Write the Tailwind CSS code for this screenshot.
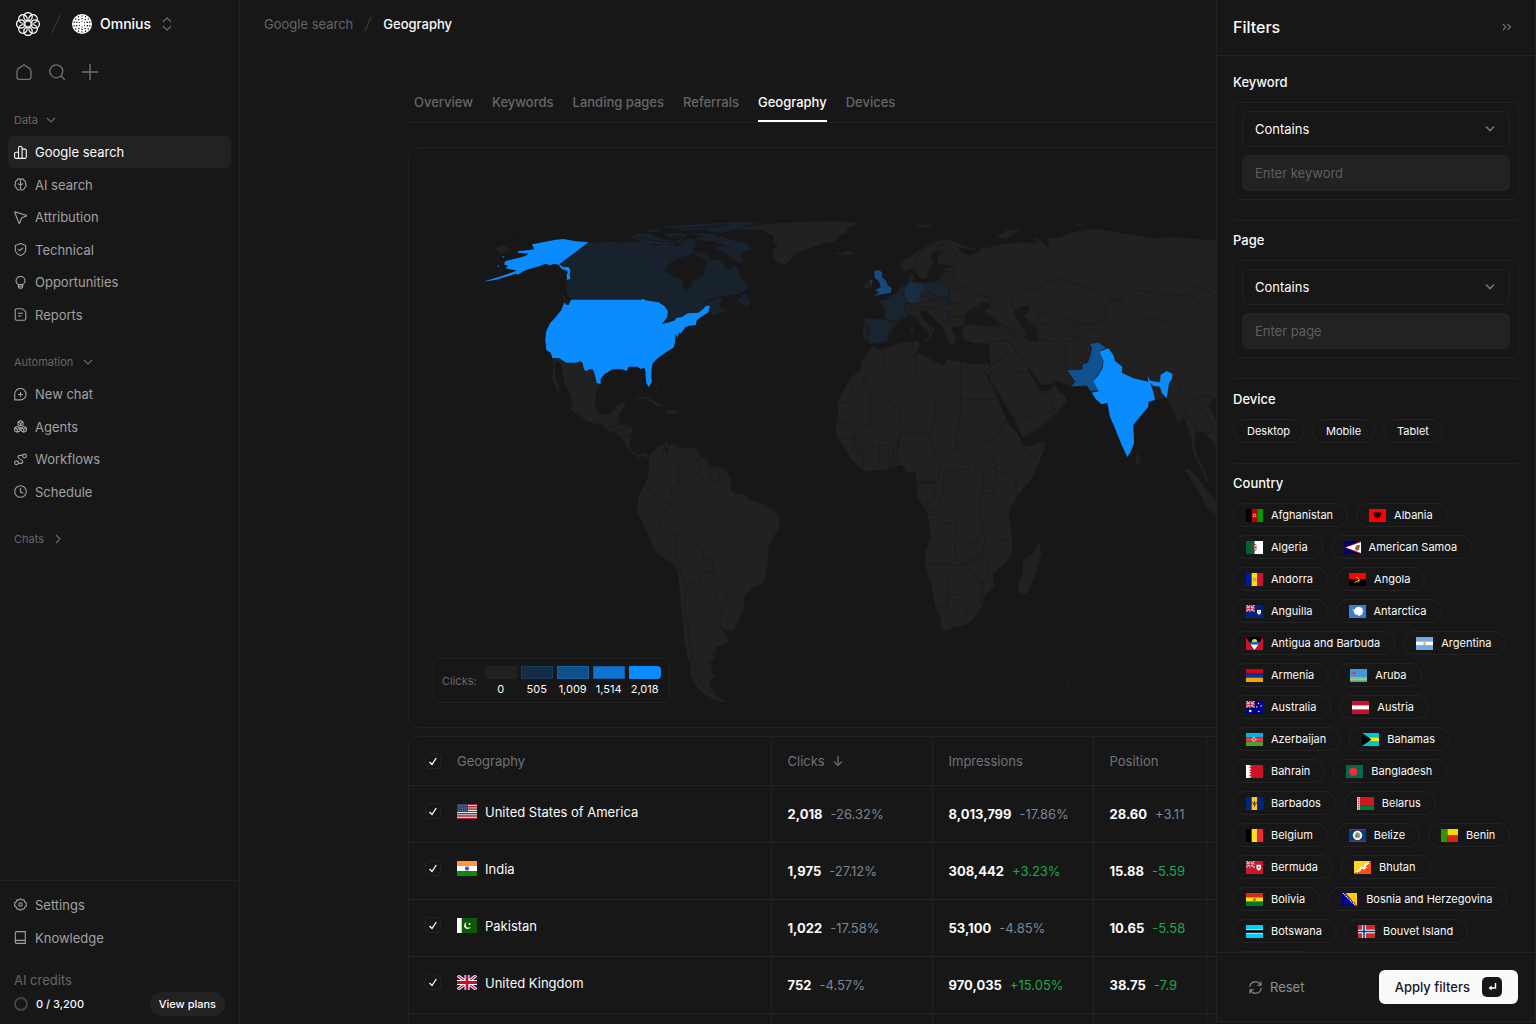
<!DOCTYPE html>
<html lang="en">
<head>
    <meta charset="UTF-8">
    <meta name="viewport" content="width=device-width, initial-scale=1.0">
    <title>Geography - Google search</title>
    <script src="https://cdn.jsdelivr.net/npm/@tailwindcss/browser@4"></script>
    <style>
        body {
            font-family: 'Inter', sans-serif;
        }
    </style>
</head>
<body class="relative flex h-screen overflow-hidden bg-[#171717] text-[13px] leading-5 text-[#fafafa]">

    <!-- SIDEBAR -->
    <aside class="flex w-60 shrink-0 flex-col border-r border-[#232323] text-[#a1a1a1]">
        <div class="flex h-12 items-center pl-4">
            <a href="#" aria-label="Home">
                <svg class="size-6" viewBox="-12 -12 24 24" fill="none" stroke="#fff" stroke-width="1.3">
                    <g id="logo-rings"></g>
                </svg>
            </a>
            <svg class="ml-2 h-5 w-4" viewBox="0 0 16 20" fill="none" stroke="#333" stroke-width="1.3"><path d="M4 19 12 1"/></svg>
            <button class="ml-2 flex items-center gap-2 text-sm font-medium text-white">
                <svg class="size-5" viewBox="-10 -10 20 20"><circle r="10" fill="#fff"/><g id="brand-dots" fill="#171717"></g></svg>
                Omnius
                <svg class="ml-0.5 h-3.5 w-3" viewBox="0 0 12 14" fill="none" stroke="#666" stroke-width="1.2" stroke-linecap="round" stroke-linejoin="round"><path d="M2.200 4.500 6 1l3.800 3.500M2.200 9.500 6 13l3.800-3.500"/></svg>
            </button>
        </div>

        <div class="flex h-12 items-center gap-[17px] pl-4 text-[#71717a]">
            <button aria-label="Home"><svg class="size-4" viewBox="0 0 16 16" fill="none" stroke="currentColor" stroke-width="1.3" stroke-linejoin="round"><path d="M1 7 2.200 4.600 8 .8l5.800 3.800L15 7v6.500c0 1-.7 1.800-1.700 1.800H2.700C1.700 15.300 1 14.500 1 13.500z"/></svg></button>
            <button aria-label="Search"><svg class="size-4" viewBox="0 0 16 16" fill="none" stroke="currentColor" stroke-width="1.3" stroke-linecap="round"><circle cx="7.300" cy="7.300" r="6.500"/><path d="m12 12 3.300 3.300"/></svg></button>
            <button aria-label="Add"><svg class="size-4" viewBox="0 0 16 16" fill="none" stroke="currentColor" stroke-width="1.4"><path d="M8 0v16M0 8h16"/></svg></button>
        </div>

        <button class="mt-4 flex h-4 items-center gap-2 pl-3.5 text-[11px] text-[#666]">Data
            <svg class="h-2 w-2.5" viewBox="0 0 10 8" fill="none" stroke="currentColor" stroke-width="1.2"><path d="m1 2 4 4 4-4"/></svg>
        </button>
        <nav class="mt-2 grid h-[195px] auto-rows-fr px-2">
            <a href="#" class="flex h-8 items-center gap-2 rounded-md bg-[#222] px-1.5 text-[#fafafa]">
                <svg class="size-[13px]" viewBox="0 0 13 13" fill="none" stroke="currentColor" stroke-width="1.1" stroke-linejoin="round"><path d="M4.500 12.400H2a1.300 1.300 0 0 1-1.400-1.300V7.600c0-.8.5-1.300 1.300-1.300h2.600m0 6.100V2c0-1 .5-1.500 1.400-1.500h.8c.9 0 1.400.5 1.400 1.500v10.400m-3.600 0h3.600m0-9.300h2.600c1 0 1.600.6 1.600 1.500v6.300c0 .9-.6 1.500-1.600 1.500H8.100"/></svg>
                Google search
            </a>
            <a href="#" class="flex h-8 items-center gap-2 rounded-md px-1.5">
                <svg class="size-[13px]" viewBox="0 0 13 13" fill="none" stroke="currentColor" stroke-width="1.1" stroke-linecap="round" stroke-linejoin="round"><path d="M6.500 1.500v10M6.500 1.800C5.500.2 3 .7 3 2.600 1.300 3 .9 4.700 1.700 5.800.4 6.800.7 9 2.300 9.600c0 2 2.700 3.100 4.200 1.700M6.500 1.800C7.500.2 10 .7 10 2.600c1.700.4 2.100 2.100 1.300 3.200 1.300 1 1 3.200-.6 3.800 0 2-2.700 3.100-4.200 1.700M4.200 5.800l2.300 1.200 2.300-1.200"/></svg>
                AI search
            </a>
            <a href="#" class="flex h-8 items-center gap-2 rounded-md px-1.5">
                <svg class="size-[13px]" viewBox="0 0 13 13" fill="none" stroke="currentColor" stroke-width="1.1" stroke-linejoin="round"><path d="M.9.9 12.300 4.300c.4.2.4.6 0 .8L7.600 7 5.700 12c-.2.4-.6.4-.8 0L.7 1.200c0-.2 0-.3.2-.3z"/></svg>
                Attribution
            </a>
            <a href="#" class="flex h-8 items-center gap-2 rounded-md px-1.5">
                <svg class="size-[13px]" viewBox="0 0 13 13" fill="none" stroke="currentColor" stroke-width="1.1" stroke-linecap="round" stroke-linejoin="round"><path d="M6.500.6 11.700 2.400v4.300c0 2.600-1.700 4.300-5.200 5.800C3 11 1.300 9.300 1.300 6.700V2.400zM4.500 6.400l1.400 1.300L8.700 5"/></svg>
                Technical
            </a>
            <a href="#" class="flex h-8 items-center gap-2 rounded-md px-1.5">
                <svg class="size-[13px]" viewBox="0 0 13 13" fill="none" stroke="currentColor" stroke-width="1.1" stroke-linecap="round"><path d="M4.300 8.600C2.800 7.700 2 6.400 2 4.900a4.500 4.500 0 0 1 9 0c0 1.500-.8 2.800-2.300 3.700M4.300 8.600h4.400v1.300c0 1.400-1 2.300-2.200 2.300s-2.200-.9-2.200-2.300zM4.500 10.200h4"/></svg>
                Opportunities
            </a>
            <a href="#" class="flex h-8 items-center gap-2 rounded-md px-1.5">
                <svg class="size-[13px]" viewBox="0 0 13 13" fill="none" stroke="currentColor" stroke-width="1.1"><path d="M3 .7h5.500l3.300 3.200v6.600c0 1.100-.7 1.800-1.800 1.800H3c-1.100 0-1.800-.7-1.800-1.800v-8C1.200 1.400 1.900.7 3 .7zM4 5.300h5M4 8h3.500"/></svg>
                Reports
            </a>
        </nav>

        <button class="mt-[23px] flex h-4 items-center gap-2.5 pl-3.5 text-[11px] text-[#666]">Automation
            <svg class="h-2 w-2.5" viewBox="0 0 10 8" fill="none" stroke="currentColor" stroke-width="1.2"><path d="m1 2 4 4 4-4"/></svg>
        </button>
        <nav class="mt-2 grid h-[130px] auto-rows-fr px-2">
            <a href="#" class="flex h-8 items-center gap-2 rounded-md px-1.5">
                <svg class="size-[13px]" viewBox="0 0 13 13" fill="none" stroke="currentColor" stroke-width="1.1" stroke-linejoin="round"><path d="M.7 11.900V6.400a5.700 5.700 0 1 1 5.700 5.500zM6.500 4v5M4 6.500h5"/></svg>
                New chat
            </a>
            <a href="#" class="flex h-8 items-center gap-2 rounded-md px-1.5">
                <svg class="size-[13px]" viewBox="0 0 13 13" fill="none" stroke="currentColor" stroke-width="1.1" stroke-linejoin="round"><path d="M6.500.5 9 1.900v2.800L6.500 6 4 4.700V1.900zM3.300 6.400l2.600 1.400v2.900l-2.600 1.500-2.700-1.500V7.800zM9.700 6.400l2.700 1.400v2.900l-2.700 1.500-2.600-1.500V7.800zM4 1.900l2.500 1.400L9 1.900M6.500 3.300V6M.6 7.800l2.700 1.500 2.600-1.500M3.300 9.300v2.900M7.100 7.800l2.600 1.500 2.700-1.500M9.700 9.300v2.900"/></svg>
                Agents
            </a>
            <a href="#" class="flex h-8 items-center gap-2 rounded-md px-1.5">
                <svg class="size-[13px]" viewBox="0 0 13 13" fill="none" stroke="currentColor" stroke-width="1.1"><circle cx="2.500" cy="9.800" r="1.900"/><circle cx="10.500" cy="3" r="1.900"/><path d="M8.600 2.400H6.300C4.800 2.400 4 3.200 4 4.300c0 2.300 4.800 1.500 4.800 4.100 0 1.200-.9 2-2.200 2H4.400"/></svg>
                Workflows
            </a>
            <a href="#" class="flex h-8 items-center gap-2 rounded-md px-1.5">
                <svg class="size-[13px]" viewBox="0 0 13 13" fill="none" stroke="currentColor" stroke-width="1.1" stroke-linecap="round"><circle cx="6.500" cy="6.500" r="5.800"/><path d="M6.500 3.300v3.500l2.300 1.100"/></svg>
                Schedule
            </a>
        </nav>

        <button class="mt-[23px] flex h-4 items-center gap-2.5 pl-3.5 text-[11px] text-[#666]">Chats
            <svg class="h-2.5 w-2" viewBox="0 0 8 10" fill="none" stroke="currentColor" stroke-width="1.2"><path d="m2 1 4 4-4 4"/></svg>
        </button>

        <div class="mt-auto border-t border-[#212121] px-2 pt-[7px] pb-2">
            <a href="#" class="flex h-[33px] items-center gap-2 px-1.5">
                <svg class="size-[13px]" viewBox="0 0 13 13" fill="none" stroke="currentColor" stroke-width="1.1" stroke-linejoin="round"><path d="M6.500.6 8 1.900l2-.1.6 1.900L12.300 5v3l-1.700 1.300-.6 1.900-2-.1-1.500 1.300L5 11.100l-2 .1-.6-1.900L.7 8V5l1.700-1.300L3 1.800l2 .1z"/><circle cx="6.500" cy="6.500" r="1.700"/></svg>
                Settings
            </a>
            <a href="#" class="flex h-[33px] items-center gap-2 px-1.5">
                <svg class="size-[13px]" viewBox="0 0 13 13" fill="none" stroke="currentColor" stroke-width="1.1"><path d="M11.300 9.400V.6H3C2 .6 1.300 1.300 1.300 2.300v8.600m10-1.500H2.800c-.9 0-1.500.6-1.500 1.500s.6 1.500 1.500 1.500h8.500V9.400"/></svg>
                Knowledge
            </a>
            <p class="mt-4 px-1.5 text-[#666]">AI credits</p>
            <div class="mt-0.5 flex items-center pl-1.5 pr-1.5 text-[11px] font-medium text-[#fafafa]">
                <span class="size-3.5 rounded-full border-2 border-[#444]"></span>
                <span class="ml-2">0 / 3,200</span>
                <button class="ml-auto h-6 rounded-full bg-[#222] px-[9px]">View plans</button>
            </div>
        </div>
    </aside>

    <!-- MAIN -->
    <main class="min-w-0 flex-1">
        <div class="flex h-12 items-center gap-[7px] px-6 text-[#666]">
            <a href="#">Google search</a>
            <svg class="h-4 w-4" viewBox="0 0 16 16" fill="none" stroke="#3a3a3a" stroke-width="1.2"><path d="M5 15 11 1"/></svg>
            <span class="font-medium text-[#fafafa]">Geography</span>
        </div>

        <div class="mx-auto mt-11 max-w-[960px]">
            <nav class="flex h-[31px] gap-[19px] border-b border-[#212121] px-1.5 font-medium text-[#666]">
                <a href="#">Overview</a>
                <a href="#">Keywords</a>
                <a href="#">Landing pages</a>
                <a href="#">Referrals</a>
                <a href="#" class="border-b-2 border-white text-[#fafafa]">Geography</a>
                <a href="#">Devices</a>
            </nav>

            <!-- World map -->
            <section class="relative mt-6 overflow-hidden rounded-xl border border-[#212121]">
                <svg class="block w-full" viewBox="409 148 958 579" fill="#212121" stroke="#181818" stroke-width="2" stroke-linejoin="round" role="img" aria-label="Clicks by country">
                    <!-- North America -->
                    <g transform="translate(476 210) scale(.33333)">
                        <path d="M765 58 810 50 870 41 960 35 1080 32 1157 38 1127 50 1110 58 1118 66 1090 78 1077 95 1032 105 990 120 960 130 945 148 925 166 905 158 890 142 886 120 905 108 892 92 890 78 860 62 810 60z"/>
                        <path d="m1082 122 18 4 25-5 17 4-10 10-27 3-17-6z"/>
                        <path d="m55 118 25-15 18 6-3 6 17 4-18 4-20 9zM110 86l18 0-10 2z"/>
                        <path d="M229 444 250 445 270 458 298 458 314 454 320 460 323 476 330 484 341 477 350 478 356 492 362 520 372 522 362 545 358 570 362 600 378 615 400 610 415 600 425 580 452 576 445 592 435 605 430 620 427 643 465 645 470 660 462 700 467 720 487 735 504 725 517 740 512 748 500 735 487 745 462 725 447 702 432 680 418 668 392 662 375 640 355 643 320 627 282 598 288 575 278 545 265 518 257 480 252 458 240 455 236 470 239 490 243 515 250 530 253 558 246 545 238 530 226 505 231 490z"/>
                        <path d="m473 568 17-9 25 2 25 14 23 17-18-2-15-10-25-14zm90 32 27-3 23 11-13 6-25-1zm-38 14h14v4h-12zm100-1h13v4h-12zM540 515l4 12-2 20-3-15zM640 625l3 10"/>
                        <path d="M400 622h28M404 626l-2 22-10 12M403 655l22-12 40 2M410 662l16 2 44-16M432 680l35-3" fill="none"/>
                        <g fill="#18222d" stroke="none">
                            <path d="M337 97 370 98 405 94 440 98 480 95 510 103 545 107 575 104 605 108 620 98 635 85 655 90 660 104 650 118 655 128 640 135 618 142 590 152 570 170 567 185 590 199 618 208 625 225 622 240 632 244 645 232 648 213 670 206 682 195 690 165 697 151 715 148 735 150 748 160 742 170 755 180 778 168 788 185 790 200 812 222 816 235 805 245 775 255 735 258 700 268 675 287 715 266 740 264 728 285 740 297 760 298 730 310 708 320 702 287 690 287 682 297 667 308 635 310 600 324 557 343 573 323 576 304 565 288 548 277 498 269 285 269 272 250 270 215 284 206 283 180 278 171 262 172 250 163z"/>
                            <path d="m778 275 17-13 10-14 7 14 10 6-2 22-15-3-10-7zM252 250l12 6 14 22-10-4zM243 222l6 8-2 10-5-12zM462 82l23-10 35-2 15 8 25 10 30 4 10 8-30 4-40-2-30 2-12-12-18-6z"/>
                            <path d="m660 85 40-10 40 5 35 12 35 8 18 20-28 5-10 15 20 8-20 8-25-11-20-15-30-15 30-10-25-10-40 0-18-4zM560 50l60-5 60-3 80-6 102 1-32 8-40 8-50 15-40-3-10-7-50 4-40-2zM560 72l40-4 40 7-20 9-40-2zM640 68l50 2 40 4-30 6-45-4zM650 133l30-8 25 20-15 5zM500 60l42-5 20 6-34 7zM600 92l14-6 10 8-14 6zM735 290l16 0-4 4z"/>
                        </g>
                        <!-- Sounds between the Arctic islands -->
                        <path d="M470 88l28-4 34 6 28 6 40-2M590 78l36 4 30-6M660 92l34 2 36 12 30 4M700 58l-40 6-30-4M560 58l70-4 70-2 60-8M720 122l24 6 26 12M505 66l40 4 50-6" fill="none" stroke="#171717" stroke-width="3"/>
                        <g fill="#0a8cff" stroke="none">
                            <path d="M285 269 498 269 502 266 508 271 548 277 565 288 576 304 573 323 557 343 580 337 597 331 600 324 618 321 635 310 667 308 682 297 690 287 702 287 697 307 672 323 661 333 660 345 640 347 627 352 622 361 612 372 609 367 605 383 599 372 597 395 594 412 570 427 545 445 530 460 527 475 526 500 528 515 518 532 511 518 509 500 508 482 505 473 494 477 484 470 458 470 452 483 440 478 410 478 385 493 374 507 374 522 362 520 356 492 350 478 341 477 330 484 323 476 320 460 314 454 298 458 270 458 250 445 229 444 224 428 211 420 208 390 210 365 222 340 240 320 256 300 265 277 272 285 278 285z"/>
                            <path d="m21 215 49-15 40-13 12-6-22-3-12-4 8-5-12-6 4-9 16-5 26-6 18-5 10-7-33-3 3-5 32-3 15-2-7-15 32-6 35-7 27-3 38 7 37 3-45 34-42 32 12 9 16-1 5 9-2 15 3 11-11 4-1-15 4-9-6-5-12-3-10-13-12-4-14 5-14-5-18 8-20 5-20 7-15 6-17 4-23 8-35 10zM64 166l7 2-4 3zM78 139l8 1-4 3zM120 190l20-4-16 8z"/>
                        </g>
                    </g>
                    <!-- South America -->
                    <g transform="translate(620 430) scale(.33333)">
                        <path d="M85 80 95 68 110 52 130 42 142 30 147 45 160 38 172 50 195 55 222 50 238 65 245 80 262 92 270 108 300 110 318 118 328 135 335 160 330 180 350 190 370 193 390 210 435 222 460 242 475 252 481 275 475 300 455 330 447 350 446 390 440 425 432 455 425 465 395 475 380 490 373 500 375 520 368 550 352 580 342 602 325 603 308 598 322 620 325 630 318 642 290 650 290 665 275 672 285 688 270 700 278 715 274 725 288 740 272 750 270 765 277 778 290 795 305 808 322 813 305 818 280 808 255 795 232 775 220 755 210 730 212 700 203 690 198 660 190 635 190 580 182 540 178 480 172 430 165 408 140 390 110 370 95 340 80 305 62 270 50 250 50 235 55 200 62 180 72 165 85 135z"/>
                        <path d="M133 43 130 85 140 95 175 105 172 155 178 160 152 170 158 200 150 235 130 240 120 275 128 300 150 308 155 320 198 305 202 328 248 352 252 385 275 392 282 428 285 455 302 460 320 480 318 520 288 518 290 490 245 462 240 435 250 425 275 425M175 110l5 55 15 5 12-10-4-28 35-5 3-25-8-10 10-25M240 125l10 25 10 15 14-10-6-48M272 150l25 5 2-40M298 152l12 2 10-25M70 167l35 22 15 22 30 5M105 190l-15 25-20 28-12-10M155 320l15 2 2 70 20 70 8 5 10-12 32 2M172 410l22 50 5 30-8 40 15 70 5 60 15 50 20 60 45 25M325 505l-22 45 42 35M303 550l2 48" fill="none"/>
                        <path d="m138 50 8 10-2 10-6-2z" fill="#181818"/>
                    </g>
                    <!-- Europe, Asia and Africa -->
                    <g transform="translate(820 210) scale(.33333)">
                        <path d="M240 155 265 145 290 125 320 103 350 93 385 86 412 97 430 105 468 115 465 122 430 116 415 113 425 125 445 135 475 125 480 115 510 110 560 100 600 97 640 100 650 92 625 83 650 82 668 95 688 112 672 115 690 105 680 85 720 80 760 65 800 58 830 55 870 62 900 68 950 75 1000 85 1060 80 1120 86 1200 90 1500 95V560H1195L1175 573 1165 590 1185 620 1195 660 1260 700 1200 725 1180 700 1165 680 1150 665 1130 665 1125 690 1130 730 1150 770 1170 820 1160 815 1143 780 1120 735 1112 690 1095 630 1090 620 1075 643 1065 620 1055 590 1040 565 1015 570 1003 570 985 590 960 620 940 645 942 700 932 725 922 741 905 705 885 655 870 620 862 578 845 583 828 568 815 547 800 528 752 530 710 510 690 525 665 525 640 490 625 472 626 485 650 520 660 542 690 540 705 522 715 545 740 560 738 575 715 605 685 635 640 665 608 685 600 665 580 620 545 565 510 510 508 490 510 460 508 435 508 400 500 402 460 400 430 390 425 365 432 350 400 352 395 365 412 385 400 404 390 405 375 370 365 350 345 330 320 305 300 305 310 330 340 352 348 365 335 365 338 380 325 388 325 365 300 345 285 322 270 315 258 325 230 338 225 352 210 370 205 390 190 400 155 402 145 395 133 392 128 375 135 345 130 328 190 328 195 300 185 280 168 275 205 262 230 248 245 225 265 222 266 200 278 190 283 200 278 213 312 218 345 215 358 208 362 195 372 190 372 175 405 168 362 165 350 158 352 140 372 122 345 125 330 140 340 155 335 170 322 190 320 205 300 208 290 190 278 175 255 185 243 175z"/>
                        <path d="M155 405 185 418 240 398 295 392 300 410 292 428 330 445 370 468 380 447 420 455 460 462 500 458 508 465 512 490 505 500 490 478 520 535 540 580 560 630 590 665 602 688 612 710 640 705 675 694 675 715 660 750 640 800 600 850 570 895 568 930 577 975 577 1030 560 1055 520 1090 522 1130 495 1155 490 1185 465 1220 440 1245 400 1253 372 1264 360 1255 362 1230 345 1190 333 1120 313 1060 318 1020 332 985 325 930 318 900 290 860 292 820 285 785 265 788 245 765 190 780 133 785 95 750 75 715 50 685 45 655 55 630 52 580 70 540 95 500 120 480 125 450 150 420z"/>
                        <path d="m658 995 7 35-20 70-23 50-17 7-10-12v-30l12-20 1-45 32-20zM948 725l14 25-2 13-12 0-3-23zM1092 773l20 7 38 45 15 20 25 30v40l-25-15-25-45-30-50zM736 1417l10-3 4 4-8 5zM722 1092l4 2-3 3z"/>
                        <path d="m270 45 70-3-10 10-30 1zM525 85l35-25 48-3-18 10-30 20zM735 40l60 2-15 8zM132 225l15-14 11 7-2 14-21 8zM302 390l25-4-2 12zM270 350l10-3 2 22-8 4zM400 412l25 4-15 2zM480 416l16-2-8 5zM47 123l15 5 25-7 17 4-10 10-27 3-17-6z"/>
                        <g fill="#181818">
                            <path d="M432 345 434 318 445 303 470 292 480 293 478 280 500 278 512 290 487 305 520 325 545 345 500 350 465 343z"/>
                            <path d="m580 305 20-15 25 0v15l-15 10 15 20 25 15 5 40-25 2-18-7 8-15-20-30z"/>
                        </g>
                        <!-- Borders -->
                        <path d="M570 262 600 243 660 235 670 218 720 208 775 222 830 245 885 268 855 290 858 330 800 345 785 340 765 350 795 360 830 355M570 262l5 25 10 10M885 268l70-28 95 18 65-5 30 35-35 15-50 38-80-18-60-40-35-15M1110 225l50 15 35 22M655 310l35-5 30 15 40 15 25 5M655 310v35l35-5 40 30 35 15 25-15M570 392l25 38 30 42M655 390l65 5 15 20 5 65M735 395l25-5 30-5 18 17M510 395l55-3 30 38M540 345l25 8 30 5M565 353l10 20 15 10M510 440l20 15 40-30M510 470l25-20 65 40 25-5M598 628l42-8 65-20-15-40-30-15M705 600l-20 35M907 470l40 25 38 18M1065 500l15 40-20 45M1080 560l20 15 60-20 30 15M1095 585l5 40 25 10 5 30M1125 580l35 30 20 55-35 5"/>
                        <path d="M285 190 288 150 305 120 335 103 360 110 370 100 385 95 410 145M405 168l-5 35-35-5M375 182l30 5M400 203l40 25-50 15-5 40 35-5 10 20M440 228l20 15 55 25-5 20M385 220l15-17M388 262l-35 10-50-15M255 290l35-10 35-5 30-10 40 12M262 315l15-20 40-5 30 10M350 275l-15 18M388 320l45 0M360 340l35-5 15 12M400 280l-40 5-20 15M144 345l4 48" fill="none"/>
                        <path d="M50 577h40l5-52 33-3V503l62-33-2-52M128 505l20 27 4 116-62 7M55 632l38 15M128 503 240 603 345 545 292 505 285 440 275 395M285 440l7-15M422 455v145l-77-35M430 568h105M422 600l-12 80 0 35M345 570v50l-15 50H240L230 730M240 603l0 30-50 25-35 35 8 25M93 655l15 30M50 685l55 0-5 20 25 15 5 40M190 658l30 25 18 20M163 710l35-5 20-10M178 705l2 70M205 705l5 65M218 700l2 68M125 720l5 60M75 715l28-5M85 735l15-20 20 30M240 675l-10 70 12 20M330 675l15 50-35 35-20 25M345 725l-10 25 25 20-5 45H295M410 715l-30 15-40 15M410 715l40 60-75 10-5 20 0 45-25 50-30 5M410 700l30 20 80-30 20-25 10-30 50 30M430 730l60 60 40-20-15-40M520 690l20-28M520 775l50 25 80-55-35-25-15-30M530 780l-10 70H485l8-60M588 795v60l15-5M520 853l50 40M485 860l-8 50 15 40 25 15 0 30 60-10M322 915h35l10 25 40 0v40l20 15 45 5 15-50 10 40-10 45-10 20M405 1003l0 45 30 15 60-45 25-10 12 20-15 15M313 1060l80 3M393 1063l45 5 40-30M390 1065l-8 90 50 0 55-40-50-50M382 1110v80l-35 0M487 1117v60M435 1063l35 50 30 0 5-60M438 1205l15-12 8 8-15 16zM475 1165l8-8 6 10-8 10zM300 820h40l5 50-30 15" fill="none"/>
                        <!-- Countries with clicks -->
                        <path d="m162 183 16-3 10 10-3 10 13 12 5 13 12 10-3 13-50 9 16-10-13-7 17-8-4-17-13-10zM148 210l10 3-3 8z" fill="#164a7c" stroke="none"/>
                        <path d="m168 275 22-5 15-8 25-14 32 17 3 10-13 15 10 35-17 0-20 10-33-7 3-28-10-20zM132 326l18-2 42 4 35 12-22 25-2 15-18 18-33 5-8-10 4-43-15-10zM235 245l10-18 12 0-5 20zM312 222l28-8 40 6 8 35-10 8-28-5-34-16zM353 299l15-3 17 19 2 18-15 2-7-20zM275 335h5v10h-4z" fill="#182430"/>
                        <path d="m132 340 12 6-3 30 3 15-12 1-5-17z"/>
                        <path d="m258 225 14-12 13 5 23 0 8 22-18 15 9 17-17 8-25 0-13-20 0-20z" fill="#182c42"/>
                        <path d="m740 480 45-2 3-16 15-5 9-27 3-18-7-10 27-6 25 18-22 11 13 25-3 20-10 20-16 20 16 30-26 5-12-17-48 2 13-15z" fill="#105190"/>
                        <path d="m838 425 27-10 15 20 5 18 22 17-2 18 35 17 45 10-2-17 7 14 30 5 2-22 18-12 18 9-3 16-8 12-7 45-15-17-5-18-20-3-10-9 10 27 5 25-20 5 0 15-25 30-20 25 2 55-10 25-10 16-17-36-20-50-15-35-8-42-17 5-17-15-13-20 21-4-16-30 16-20 12-20 3-20z" fill="#0a8cff" stroke="none"/>
                    </g>
                </svg>

                <div class="absolute bottom-6 left-6 flex items-center gap-2 rounded-md border border-[#212121] px-2 py-[5px] text-[11px] leading-4">
                    <span class="text-[#666]">Clicks:</span>
                    <ul class="grid grid-cols-5 gap-1 text-center">
                        <li><span class="mt-0.5 block h-[13px] w-8 rounded-l bg-[#212121]"></span><span class="mt-0.5 block">0</span></li>
                        <li><span class="mt-0.5 block h-[13px] w-8 border border-[#143c63] bg-[#162c42]"></span><span class="mt-0.5 block">505</span></li>
                        <li><span class="mt-0.5 block h-[13px] w-8 border border-[#1463aa] bg-[#105088]"></span><span class="mt-0.5 block">1,009</span></li>
                        <li><span class="mt-0.5 block h-[13px] w-8 border border-[#0f5da5] bg-[#0e74d0]"></span><span class="mt-0.5 block">1,514</span></li>
                        <li><span class="mt-0.5 block h-[13px] w-8 rounded-r bg-[#0a8cff]"></span><span class="mt-0.5 block">2,018</span></li>
                    </ul>
                </div>
            </section>

            <!-- Table -->
            <div class="mt-2 overflow-hidden rounded-t-xl border border-[#212121]">
                <table class="w-full table-fixed text-left">
                    <colgroup>
                        <col class="w-[362px]">
                        <col class="w-[161px]">
                        <col class="w-[161px]">
                        <col class="w-[113px]">
                        <col>
                    </colgroup>
                    <thead class="text-[#71717a]">
                        <tr class="h-12 divide-x divide-[#232323]">
                            <th class="px-4 font-normal">
                                <div class="flex items-center gap-4">
                                    <span class="relative size-4">
                                        <input type="checkbox" checked aria-label="Select all" class="block size-4 appearance-none rounded border border-[#232323]">
                                        <svg class="pointer-events-none absolute inset-0 size-4" viewBox="0 0 16 16" fill="none" stroke="#fff" stroke-width="1.3"><path d="m4.500 9 2.500 2.500 4.300-6.500"/></svg>
                                    </span>
                                    Geography
                                </div>
                            </th>
                            <th class="px-4 font-normal">
                                <span class="flex items-center gap-2">Clicks
                                    <svg class="h-3 w-2.5" viewBox="0 0 10 12" fill="none" stroke="currentColor" stroke-width="1.2"><path d="M5 1v9.500M1 6.500l4 4 4-4"/></svg>
                                </span>
                            </th>
                            <th class="px-4 font-normal">Impressions</th>
                            <th class="px-4 font-normal">Position</th>
                            <th class="px-4"></th>
                        </tr>
                    </thead>
                    <tbody id="rows"></tbody>
                </table>
            </div>
        </div>
    </main>

    <!-- FILTERS PANEL -->
    <aside class="absolute top-0 right-0 bottom-0.5 flex w-80 flex-col border border-t-0 border-[#232323] bg-[#171717]">
        <div class="flex h-14 shrink-0 items-center justify-between border-b border-[#232323] pr-[23px] pb-0.5 pl-4">
            <h2 class="text-base font-medium">Filters</h2>
            <button aria-label="Close filters"><svg class="h-2 w-2.5" viewBox="0 0 10 8" fill="none" stroke="#71717a" stroke-width="1.1"><path d="m1 1 3 3-3 3M5.500 1l3 3-3 3"/></svg></button>
        </div>

        <div class="min-h-0 flex-1 overflow-hidden px-4 pt-4">
            <section class="border-b border-[#212121] pb-5">
                <label for="keyword" class="block font-medium">Keyword</label>
                <div class="mt-2.5 flex flex-col gap-2 rounded-md border border-[#212121] p-2">
                    <div class="relative">
                        <select aria-label="Keyword match" class="block h-9 w-full appearance-none rounded-md border border-[#212121] px-3">
                            <option>Contains</option>
                        </select>
                        <svg class="pointer-events-none absolute top-3.5 right-[15px] h-2 w-2.5" viewBox="0 0 10 8" fill="none" stroke="#71717a" stroke-width="1.7"><path d="m1 1.500 4 4 4-4"/></svg>
                    </div>
                    <input id="keyword" type="text" placeholder="Enter keyword" class="h-9 w-full rounded-md bg-[#222] px-[13px] placeholder:text-[#5e5e5e]">
                </div>
            </section>

            <section class="border-b border-[#212121] pt-[9px] pb-5">
                <label for="page" class="block font-medium">Page</label>
                <div class="mt-2.5 flex flex-col gap-2 rounded-md border border-[#212121] p-2">
                    <div class="relative">
                        <select aria-label="Page match" class="block h-9 w-full appearance-none rounded-md border border-[#212121] px-3">
                            <option>Contains</option>
                        </select>
                        <svg class="pointer-events-none absolute top-3.5 right-[15px] h-2 w-2.5" viewBox="0 0 10 8" fill="none" stroke="#71717a" stroke-width="1.7"><path d="m1 1.500 4 4 4-4"/></svg>
                    </div>
                    <input id="page" type="text" placeholder="Enter page" class="h-9 w-full rounded-md bg-[#222] px-[13px] placeholder:text-[#5e5e5e]">
                </div>
            </section>

            <section class="border-b border-[#212121] pt-2.5 pb-5">
                <h3 class="font-medium">Device</h3>
                <div class="mt-2.5 flex gap-2 text-[11px]">
                    <button class="h-6 rounded-full border border-[#232323] px-[13px]">Desktop</button>
                    <button class="h-6 rounded-full border border-[#232323] px-[13px]">Mobile</button>
                    <button class="h-6 rounded-full border border-[#232323] px-[13px]">Tablet</button>
                </div>
            </section>

            <section class="pt-[9px]">
                <h3 class="font-medium">Country</h3>
                <div id="countries" class="mt-2.5 flex flex-wrap gap-2 text-[11px]"></div>
            </section>
        </div>

        <div class="flex h-[69px] shrink-0 items-center justify-between border-t border-[#232323] pr-[17px] pl-8">
            <button class="flex items-center gap-2 text-[#8f8f8f]">
                <svg class="size-[13px]" viewBox="0 0 13 13" fill="none" stroke="currentColor" stroke-width="1.1" stroke-linecap="round" stroke-linejoin="round"><path d="M.8 5.800A5.700 5.700 0 0 1 11.500 3.800M12 .8v3.400H8.700M12.200 7.200A5.700 5.700 0 0 1 1.500 9.200M1 12.200V8.800h3.300"/></svg>
                Reset
            </button>
            <button class="flex h-[34px] items-center gap-3 rounded-md bg-[#fafafa] px-4 font-medium text-[#171717]">
                Apply filters
                <svg class="size-5" viewBox="0 0 20 20" fill="none"><rect width="20" height="20" rx="5" fill="#171717"/><path d="M13.500 6v5H8.500" stroke="#fff" stroke-width="1.4"/><path d="M6.500 11 9.700 8.400v5.200z" fill="#fff"/></svg>
            </button>
        </div>
    </aside>

    <script>
        // --- Logos ---
        const rings = document.getElementById('logo-rings');
        const dots = document.getElementById('brand-dots');
        let ringMarkup = '';
        for (let i = 0; i < 8; i++) {
            ringMarkup += `<circle cy="-7.200" r="4.200" transform="rotate(${i * 45})"/>`;
        }
        rings.innerHTML = ringMarkup;

        let dotMarkup = '';
        [[2.9, 6, 0.55], [5.5, 10, 0.75], [8, 14, 0.75]].forEach(([r, n, size]) => {
            for (let i = 0; i < n; i++) {
                dotMarkup += `<circle cy="${-r}" r="${size}" transform="rotate(${(i * 360) / n})"/>`;
            }
        });
        dots.innerHTML = dotMarkup;

        // --- Flags, drawn on a 17 x 13 grid ---
        const rect = (x, y, w, h, c) => `<rect x="${x}" y="${y}" width="${w}" height="${h}" fill="${c}"/>`;
        const bands = (...c) => c.map((color, i) => rect(0, (13 / c.length) * i, 17, 13 / c.length, color)).join('');
        const pales = (...c) => c.map((color, i) => rect((17 / c.length) * i, 0, 17 / c.length, 13, color)).join('');
        const path = (d, c) => `<path d="${d}" fill="${c}"/>`;
        const dot = (x, y, r, c) => `<circle cx="${x}" cy="${y}" r="${r}" fill="${c}"/>`;
        const line = (d, c, w) => `<path d="${d}" fill="none" stroke="${c}" stroke-width="${w}"/>`;
        const jack = rect(0, 0, 17, 13, '#012169') + line('M0 0 17 13M17 0 0 13', '#fff', 2.6) + line('M0 0 17 13M17 0 0 13', '#c8102e', 0.9)
            + line('M8.500 0v13M0 6.500h17', '#fff', 4.2) + line('M8.500 0v13M0 6.500h17', '#c8102e', 2.4);
        const canton = `<g transform="scale(.5)">${jack}</g>`;

        const flags = {
            us: bands('#b22234', '#fff', '#b22234', '#fff', '#b22234', '#fff', '#b22234', '#fff', '#b22234', '#fff', '#b22234', '#fff', '#b22234') + rect(0, 0, 9.3, 7, '#31406f')
                + '<path d="M1 1.500h8M1.500 3.500h8M1 5.500h8" stroke="#9ca3c4" stroke-width=".7" stroke-dasharray=".7 .9"/>',
            in: bands('#ff9933', '#fff', '#128807') + dot(8.5, 6.5, 1.9, '#6a6ac8') + dot(8.5, 6.5, 0.7, '#22228f'),
            pk: rect(0, 0, 17, 13, '#0c590b') + rect(0, 0, 4, 13, '#fff') + dot(9, 6.5, 2.9, '#fff') + dot(9.9, 5.8, 2.5, '#0c590b') + dot(10.6, 5.2, 0.8, '#fff'),
            gb: jack,
            af: pales('#000', '#bf0000', '#009900') + dot(8.5, 6.6, 2, '#d98080') + dot(8.5, 6.6, 0.8, '#bf0000'),
            al: rect(0, 0, 17, 13, '#ff0000') + path('M8.500 4.300 7.500 2.800 6.500 3.800 4.500 3 5 5 4.500 6.300 6 6.500 5.500 8.500 7.500 8.300 8.500 10.500 9.500 8.300 11.500 8.500 11 6.500 12.500 6.300 12 5 12.500 3 10.500 3.800 9.500 2.800z', '#200'),
            dz: rect(0, 0, 8.5, 13, '#006233') + rect(8.5, 0, 8.5, 13, '#fff') + line('M10.500 4.300a2.900 2.900 0 1 0 0 4.400', '#d21034', 1) + dot(9.8, 6.5, 1, '#d21034'),
            as: rect(0, 0, 17, 13, '#000066') + path('M0 6.500 17 0v13z', '#bd1021') + path('M2 6.500 17 1v11z', '#fff') + path('m11 7 2-3 3 0-1 5-3 1z', '#8a6a3a'),
            ad: pales('#0018a8', '#fedf00', '#d0103a') + dot(8.5, 6.5, 2, '#c7a060') + dot(8.5, 6.5, 0.8, '#e8c850'),
            ao: rect(0, 0, 17, 6.5, '#ff0000') + rect(0, 6.5, 17, 6.5, '#000') + line('M7 4.500c3 0 4 3 2 5M5.500 9.500l5-2.500', '#ffec00', 0.9),
            ai: rect(0, 0, 17, 13, '#00247d') + canton + path('M11 5h4v3l-2 2-2-2z', '#fff') + dot(13, 6.6, 1, '#f5b83d'),
            aq: rect(0, 0, 17, 13, '#3a7dce') + path('m3.200 4 2 1L7 2.500l3-.8 3.200 1.300.9 3-1 3.500-3 1.600L8.500 10 5.500 9 5 6.800z', '#fff'),
            ag: rect(0, 0, 17, 13, '#ce1126') + path('M0 0h17L8.500 13z', '#000') + dot(8.5, 4.5, 2.6, '#fcd116') + path('M3.300 5h10.400l-1.300 2.500H4.600z', '#0072c6') + path('M4.600 7.500h7.800L8.500 13z', '#fff'),
            ar: bands('#74acdf', '#fff', '#74acdf') + dot(8.5, 6.5, 1.2, '#e8a33d'),
            am: bands('#d90012', '#0033a0', '#f2a800'),
            aw: rect(0, 0, 17, 13, '#3d9bd9') + rect(0, 8.5, 17, 1, '#f9d616') + rect(0, 10.3, 17, 1, '#f9d616') + path('m4 1.600.8 1.700 1.700.8-1.700.8L4 6.600l-.8-1.700L1.500 4l1.700-.8z', '#ef3340'),
            au: rect(0, 0, 17, 13, '#00008b') + canton + dot(4.3, 10, 1.3, '#fff') + dot(12.5, 2.5, 0.7, '#fff') + dot(10.8, 6, 0.7, '#fff') + dot(15, 5, 0.7, '#fff') + dot(12.8, 10.5, 0.8, '#fff'),
            at: bands('#c8102e', '#fff', '#c8102e'),
            az: bands('#00b5e2', '#ef3340', '#509e2f') + line('M9 5.200a1.700 1.700 0 1 0 0 2.600', '#fff', 0.8) + dot(9.8, 6.5, 0.7, '#fff'),
            bs: bands('#00c6d2', '#ffe800', '#00c6d2') + path('M0 0 9.500 6.500 0 13z', '#000'),
            bh: rect(0, 0, 17, 13, '#ce1126') + path('M0 0h3l2.500 1.300L3 2.600l2.500 1.300L3 5.200l2.500 1.300L3 7.800l2.500 1.300L3 10.400l2.500 1.300L3 13H0z', '#fff'),
            bd: rect(0, 0, 17, 13, '#006a4e') + dot(7.3, 6.8, 4, '#f42a41'),
            bb: pales('#00267f', '#ffc726', '#00267f') + line('M8.500 4v6M6.800 5c0 2 .5 2.600 1.700 2.600s1.700-.6 1.700-2.600', '#3a2c00', 0.9),
            by: rect(0, 0, 17, 8.7, '#ce1720') + rect(0, 8.7, 17, 4.3, '#007c30') + rect(0, 0, 2.6, 13, '#fff') + line('M1.300 0v13', '#ce1720', 1.2) + '<path d="M1.300 .5v12.500" stroke="#fff" stroke-width="1.2" stroke-dasharray=".7 1.5"/>',
            be: pales('#000', '#fdda24', '#ed2939'),
            bz: rect(0, 0, 17, 13, '#003f87') + rect(0, 0, 17, 1.3, '#ce1126') + rect(0, 11.7, 17, 1.3, '#ce1126') + dot(8.5, 6.5, 4.7, '#fff') + dot(8.5, 6.5, 3, '#a9b88c') + dot(7.5, 7, 1, '#7a4a20') + dot(9.8, 7, 1, '#c05a40') + dot(8.5, 4.5, 1, '#3a7d2c'),
            bj: rect(0, 0, 6.5, 13, '#319400') + rect(6.5, 0, 10.5, 6.5, '#ffd600') + rect(6.5, 6.5, 10.5, 6.5, '#de2110'),
            bm: rect(0, 0, 17, 13, '#cf142b') + canton + path('M10.500 3.800h4.500v3.700l-2.200 2.500-2.300-2.500z', '#fff') + dot(12.7, 6.5, 1.1, '#5b6b5b'),
            bt: path('M0 0h17L0 13z', '#ffd520') + path('M17 0v13H0z', '#ff4e12') + line('M2.500 11 6 9l1-2.500 3 .5 1.500-3 3.500-2', '#fff', 1.8) + line('M9 8.500 13 6', '#fff', 1),
            bo: bands('#d52b1e', '#ffe000', '#007934') + dot(8.5, 6.5, 1.5, '#8a7a30'),
            ba: rect(0, 0, 17, 13, '#000099') + path('M4.500 0H16v13z', '#ffcc00') + '<path d="m2 0 13 13" stroke="#fff" stroke-width="1.3" stroke-dasharray="1.2 .8"/>',
            bw: rect(0, 0, 17, 13, '#00cbff') + rect(0, 4.5, 17, 4, '#fff') + rect(0, 5.2, 17, 2.6, '#000'),
            bv: rect(0, 0, 17, 13, '#d72828') + line('M6 0v13M0 6.500h17', '#fff', 3.6) + line('M6 0v13M0 6.500h17', '#003897', 1.6),
            br: rect(0, 0, 17, 13, '#009b3a') + path('M8.500 1.500 15.500 6.500l-7 5-7-5z', '#fedf00') + dot(8.5, 6.5, 2.5, '#002776')
        };

        // --- Country chips ---
        const countries = [
            ['af', 'Afghanistan'], ['al', 'Albania'], ['dz', 'Algeria'], ['as', 'American Samoa'], ['ad', 'Andorra'], ['ao', 'Angola'],
            ['ai', 'Anguilla'], ['aq', 'Antarctica'], ['ag', 'Antigua and Barbuda'], ['ar', 'Argentina'], ['am', 'Armenia'], ['aw', 'Aruba'],
            ['au', 'Australia'], ['at', 'Austria'], ['az', 'Azerbaijan'], ['bs', 'Bahamas'], ['bh', 'Bahrain'], ['bd', 'Bangladesh'],
            ['bb', 'Barbados'], ['by', 'Belarus'], ['be', 'Belgium'], ['bz', 'Belize'], ['bj', 'Benin'], ['bm', 'Bermuda'], ['bt', 'Bhutan'],
            ['bo', 'Bolivia'], ['ba', 'Bosnia and Herzegovina'], ['bw', 'Botswana'], ['bv', 'Bouvet Island'], ['br', 'Brazil']
        ];
        document.getElementById('countries').innerHTML = countries.map(([code, name]) => `
            <button class="flex h-6 items-center gap-2 rounded-full border border-[#232323] pr-3.5 pl-3">
                <svg class="h-[13px] w-[17px]" viewBox="0 0 17 13" preserveAspectRatio="none">${flags[code]}</svg>${name}
            </button>`).join('');

        // --- Table rows ---
        const grey = 'text-[#7b8494]';
        const green = 'text-[#1fa84f]';
        const rows = [
            ['us', 'United States of America', ['2,018', '-26.32%', grey], ['8,013,799', '-17.86%', grey], ['28.60', '+3.11', grey]],
            ['in', 'India', ['1,975', '-27.12%', grey], ['308,442', '+3.23%', green], ['15.88', '-5.59', green]],
            ['pk', 'Pakistan', ['1,022', '-17.58%', grey], ['53,100', '-4.85%', grey], ['10.65', '-5.58', green]],
            ['gb', 'United Kingdom', ['752', '-4.57%', grey], ['970,035', '+15.05%', green], ['38.75', '-7.9', green]]
        ];
        const metric = ([value, change, color]) => `
            <td class="px-4"><div class="flex gap-2"><span class="font-bold">${value}</span><span class="${color}">${change}</span></div></td>`;
        document.getElementById('rows').innerHTML = rows.map(([code, name, ...metrics]) => `
            <tr class="h-[57px] divide-x divide-[#232323] border-t border-[#232323]">
                <td class="px-4 pb-1">
                    <div class="flex items-center gap-4">
                        <span class="relative mb-0.5 size-4">
                            <input type="checkbox" checked aria-label="${name}" class="block size-4 appearance-none rounded border border-[#232323]">
                            <svg class="pointer-events-none absolute inset-0 size-4" viewBox="0 0 16 16" fill="none" stroke="#fff" stroke-width="1.3"><path d="m4.500 9 2.500 2.500 4.300-6.500"/></svg>
                        </span>
                        <span class="flex items-center gap-2">
                            <svg class="h-[15px] w-5" viewBox="0 0 17 13" preserveAspectRatio="none">${flags[code]}</svg>${name}
                        </span>
                    </div>
                </td>
                ${metrics.map(metric).join('')}
                <td class="px-4"></td>
            </tr>`).join('') + `
            <tr class="h-[57px] divide-x divide-[#232323] border-t border-[#232323]"><td></td><td></td><td></td><td></td><td></td></tr>`;
    </script>
</body>
</html>
